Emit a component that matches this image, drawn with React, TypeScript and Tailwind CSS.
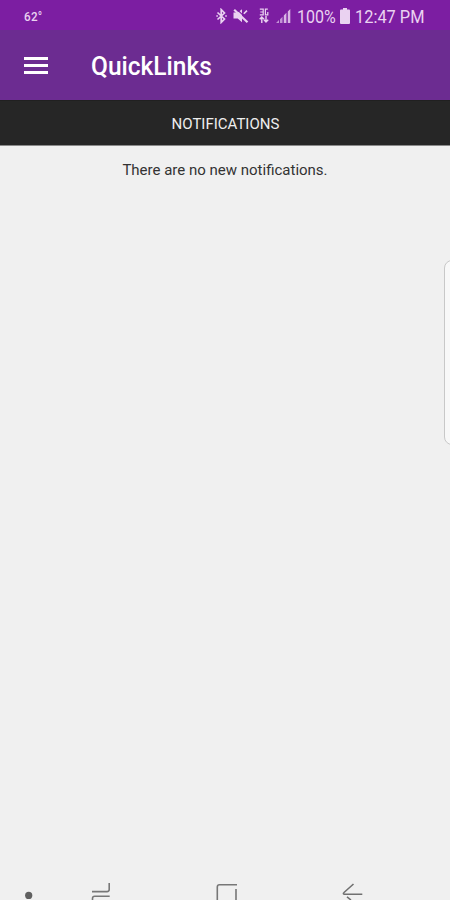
const StatusBar = () => {
  return (
    <div className="h-[30px] w-full bg-[#7c1ea2] flex items-center pl-6 pt-0.5 text-[#ead2f1]">
      <span className="w-[192px] leading-none">
        <span className="inline-block text-[12.5px] font-medium tracking-[0.3px] origin-left scale-x-[0.93]">
          62°
        </span>
      </span>
      {/* Bluetooth */}
      <svg width="11" height="16" viewBox="0 0 11 16" fill="none" stroke="currentColor" strokeWidth="1.7">
        <path d="M1.5 4.5 8.5 11 5.2 14.4V1.6L8.5 5 1.5 11.5" />
        <path d="M.3 8h1.6M9.2 8h1.6" />
      </svg>
      {/* Muted */}
      <svg className="ml-1.5" width="16" height="16" viewBox="0 0 16 16" fill="currentColor">
        <path d="M.5 4.5h4.2L9 1.2v13L4.7 10.5H.5z" />
        <path d="M3 .5 15.5 12.3" stroke="#7c1ea2" strokeWidth="1.1" />
        <path d="M1.2 1.8 14.5 14.2" stroke="currentColor" strokeWidth="2.2" />
        <path d="M10.8 5.8 14 2.6" stroke="currentColor" strokeWidth="1.6" />
      </svg>
      {/* Network */}
      <svg className="ml-2.5" width="10" height="16" viewBox="0 0 10 16" fill="none" stroke="currentColor">
        <path d="M.8 1.2h3.4v5.6H.8M1.3 4h2.5M8.8 1.2H6.4v5.6h2.4V4" strokeWidth="1.2" />
        <path d="M2.8 15V9M.7 11.3 2.8 9 5 11.3M7 8v6M5 11.7 7 14l2.2-2.3" strokeWidth="1.4" />
      </svg>
      {/* Signal */}
      <svg className="ml-[7px]" width="16" height="16" viewBox="0 0 16 16" fill="currentColor">
        <path d="M0 15 3 12v3zM4 11.2 6.5 8.7V15H4z" opacity=".65" />
        <path d="M7.8 7.4 10.4 4.8V15H7.8zM11.8 3.4 14.3 1v14h-2.5z" opacity=".85" />
      </svg>
      <span className="ml-[5px] w-[43px] pt-0.5 text-[18px] leading-none whitespace-nowrap origin-left scale-x-[0.89]">
        100%
      </span>
      {/* Battery */}
      <svg width="10" height="16" viewBox="0 0 10 16" fill="currentColor">
        <path d="M3 0h4v1.5h2q1 0 1 1V15q0 1-1 1H1q-1 0-1-1V2.5q0-1 1-1h2z" />
      </svg>
      <span className="ml-[5px] pt-0.5 text-[18px] leading-none whitespace-nowrap origin-left scale-x-[0.91]">
        12:47 PM
      </span>
    </div>
  );
};

const Header = () => {
  return (
    <div className="h-[70px] w-full bg-[#6c2c91] flex items-center px-6 text-white">
      <button className="w-6 flex flex-col gap-1">
        <span className="h-[3px] w-full bg-white" />
        <span className="h-[3px] w-full bg-white" />
        <span className="h-[3px] w-full bg-white" />
      </button>
      <h1 className="ml-[43px] pt-1 text-[25px] font-medium whitespace-nowrap origin-left scale-x-[0.98]">
        QuickLinks
      </h1>
    </div>
  );
};

const NavigationBar = () => {
  return (
    <div className="h-5 w-full flex items-end pl-6">
      <svg width="9" height="9" viewBox="0 0 9 9">
        <circle cx="4.7" cy="4.4" r="3.6" fill="#606060" />
      </svg>
      {/* Recents */}
      <svg className="ml-[58px]" width="22" height="18" viewBox="0 0 22 18" fill="none" stroke="#777" strokeWidth="1.6">
        <path d="M1 9.6h15q2.2 0 2.2-2V1M1.5 18v-1.5q0-2.2 2.2-2.2h15" />
      </svg>
      {/* Home */}
      <svg className="ml-[103px]" width="22" height="18" viewBox="0 0 22 18" fill="none" stroke="#777" strokeWidth="1.6">
        <path d="M1.3 18V5q0-2.2 2.2-2.2H21M20 7v11" />
      </svg>
      {/* Back */}
      <svg className="ml-[104px]" width="21" height="18" viewBox="0 0 21 18" fill="none" stroke="#707070" strokeWidth="1.6">
        <path d="M20.3 12.2H2M11.5 2 2 10.5q-1.2 1 0 2M5 14.8 9 18" />
      </svg>
    </div>
  );
};

const App = () => {
  return (
    <div className="relative h-[900px] w-full bg-[#f0f0f0] flex flex-col overflow-hidden font-[Roboto,sans-serif]">
      <StatusBar />
      <Header />
      <div className="h-[46px] w-full bg-[#262626] border-y border-[#202020] border-b-[#8a8a8a] flex items-center justify-center pt-[3px] pl-px text-[15px] text-[#eeeeee]">
        NOTIFICATIONS
      </div>
      <p className="flex-1 pt-[13px] text-center text-[15px] text-[#333333]">
        There are no new notifications.
      </p>
      <NavigationBar />
      {/* Edge panel handle */}
      <div className="absolute top-[260px] left-[444px] h-[185px] w-5 rounded-[8px] border border-[#c8c8c8] bg-[#f8f8f8]" />
    </div>
  );
};

export default App;
